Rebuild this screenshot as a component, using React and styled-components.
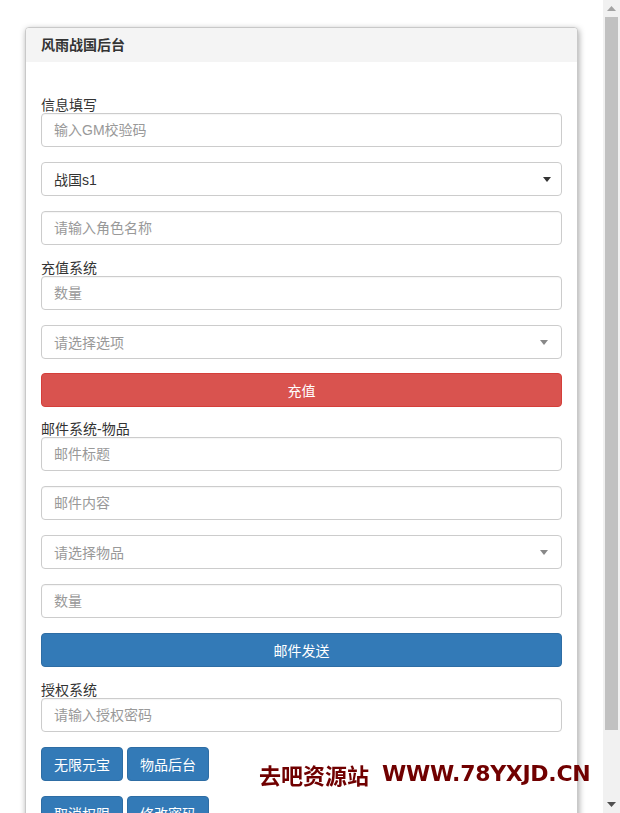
import React from "react";
import styled, { createGlobalStyle } from "styled-components";

const GlobalStyle = createGlobalStyle`
    html, body {
        margin: 0;
        padding: 0;
        background: #fff;
    }

    body {
        font-family: "Liberation Sans", "Noto Sans CJK SC", sans-serif;
        font-size: 14px;
        color: #333;
    }

    * {
        box-sizing: border-box;
    }
`;

const Page = styled.div`
    padding: 27px 42px 27px 25px;
`;

const Panel = styled.div`
    border: 1px solid #c9c9c9;
    border-radius: 4px;
    background: #fff;
    box-shadow: 1px 2px 6px rgba(0, 0, 0, 0.35);
    overflow: hidden;
`;

const PanelHeading = styled.div`
    height: 34px;
    display: flex;
    align-items: center;
    padding: 0 15px 2px;
    background: #f4f4f4;
    font-weight: bold;
    font-size: 14px;
    color: #333;
`;

const PanelBody = styled.div`
    padding: 35px 15px 15px;
`;

const Label = styled.div`
    font-size: 14px;
    line-height: 16px;
    height: 16px;
    color: #333;
`;

const Input = styled.input`
    display: block;
    width: 100%;
    height: 34px;
    padding: 6px 12px;
    margin: 0 0 ${(p) => p.$mb ?? 15}px;
    border: 1px solid #ccc;
    border-radius: 4px;
    font-family: inherit;
    font-size: 14px;
    color: #555;
    background: #fff;
    box-shadow: inset 0 1px 1px rgba(0, 0, 0, 0.04);
    outline: none;

    &::placeholder {
        color: #999;
    }
`;

const SelectBox = styled.div`
    display: flex;
    align-items: center;
    justify-content: space-between;
    height: 34px;
    padding: 0 ${(p) => (p.$placeholder ? 13 : 10)}px 0 12px;
    margin-bottom: ${(p) => p.$mb ?? 15}px;
    border: 1px solid #ccc;
    border-radius: 4px;
    color: ${(p) => (p.$placeholder ? "#999" : "#333")};
    cursor: pointer;
`;

const Caret = styled.span`
    width: 0;
    height: 0;
    border-left: 4px solid transparent;
    border-right: 4px solid transparent;
    border-top: 5px solid ${(p) => (p.$light ? "#888" : "#333")};
`;

const BlockButton = styled.button`
    display: block;
    width: 100%;
    height: 34px;
    margin: 0 0 ${(p) => p.$mb ?? 15}px;
    border: 1px solid ${(p) => (p.$danger ? "#d43f3a" : "#2e6da4")};
    border-radius: 4px;
    background: ${(p) => (p.$danger ? "#d9534f" : "#337ab7")};
    color: #fff;
    font-family: inherit;
    font-size: 14px;
    cursor: pointer;
`;

const ButtonRow = styled.div`
    display: flex;
    gap: 4px;
    margin-bottom: 15px;
`;

const Button = styled.button`
    height: 34px;
    padding: 6px 12px;
    border: 1px solid #2e6da4;
    border-radius: 4px;
    background: #337ab7;
    color: #fff;
    font-family: inherit;
    font-size: 14px;
    cursor: pointer;
`;

const Watermark = styled.div`
    position: fixed;
    left: 259px;
    top: 761px;
    display: flex;
    align-items: center;
    gap: 13px;
    color: #700000;
    font-weight: bold;
    font-size: 22px;
    line-height: 26px;
    pointer-events: none;
    white-space: nowrap;

    span:first-child {
        font-family: "Noto Sans CJK SC", sans-serif;
    }

    span:last-child {
        font-family: "DejaVu Sans", sans-serif;
        letter-spacing: -0.3px;
    }
`;

/* the window's scrollbar, drawn since the headless browser hides it */
const Scrollbar = styled.div`
    position: fixed;
    top: 0;
    right: 0;
    bottom: 0;
    width: 17px;
    display: flex;
    flex-direction: column;
    background: #f1f1f1;
`;

const ScrollArrow = styled.div`
    height: 17px;
    display: flex;
    align-items: center;
    justify-content: center;
    flex-shrink: 0;
`;

const ScrollTrack = styled.div`
    flex: 1;
    padding: 0 2px;
`;

const ScrollThumb = styled.div`
    height: 713px;
    background: #c1c1c1;
`;

const App = () => {
    return (
        <>
            <GlobalStyle />
            <Page>
                <Panel>
                    <PanelHeading>风雨战国后台</PanelHeading>
                    <PanelBody>
                        <Label>信息填写</Label>
                        <Input placeholder="输入GM校验码" />
                        <SelectBox>
                            <span>战国s1</span>
                            <Caret />
                        </SelectBox>
                        <Input placeholder="请输入角色名称" />

                        <Label>充值系统</Label>
                        <Input placeholder="数量" />
                        <SelectBox $placeholder $mb={14}>
                            <span>请选择选项</span>
                            <Caret $light />
                        </SelectBox>
                        <BlockButton $danger $mb={14}>充值</BlockButton>

                        <Label>邮件系统-物品</Label>
                        <Input placeholder="邮件标题" />
                        <Input placeholder="邮件内容" />
                        <SelectBox $placeholder>
                            <span>请选择物品</span>
                            <Caret $light />
                        </SelectBox>
                        <Input placeholder="数量" />
                        <BlockButton>邮件发送</BlockButton>

                        <Label>授权系统</Label>
                        <Input placeholder="请输入授权密码" />
                        <ButtonRow>
                            <Button>无限元宝</Button>
                            <Button>物品后台</Button>
                        </ButtonRow>
                        <ButtonRow>
                            <Button>取消权限</Button>
                            <Button>修改密码</Button>
                        </ButtonRow>
                    </PanelBody>
                </Panel>
            </Page>
            <Watermark>
                <span>去吧资源站</span>
                <span>WWW.78YXJD.CN</span>
            </Watermark>
            <Scrollbar>
                <ScrollArrow>
                    <svg width="9" height="5" viewBox="0 0 9 5">
                        <polygon points="0,5 4.5,0 9,5" fill="#a3a3a3" />
                    </svg>
                </ScrollArrow>
                <ScrollTrack>
                    <ScrollThumb />
                </ScrollTrack>
                <ScrollArrow>
                    <svg width="9" height="5" viewBox="0 0 9 5">
                        <polygon points="0,0 9,0 4.5,5" fill="#505050" />
                    </svg>
                </ScrollArrow>
            </Scrollbar>
        </>
    );
};

export default App;
